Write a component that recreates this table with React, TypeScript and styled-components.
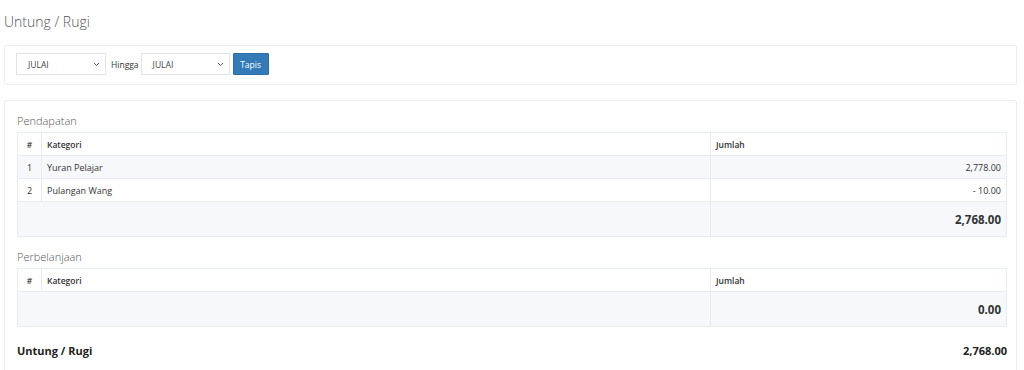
import React from "react";
import styled, { createGlobalStyle } from "styled-components";

const Global = createGlobalStyle`
  html, body { margin: 0; padding: 0; background: #fff; }
  body { font-family: "Open Sans", "Noto Sans", sans-serif; color: #333; }
  * { box-sizing: border-box; }
`;

const Page = styled.div`
  padding: 0 4px 0 4px;
  width: 1021px;
`;

const Title = styled.h1`
  margin: 0;
  padding: 12px 0 0 0;
  height: 45px;
  font-size: 14px;
  font-weight: 300;
  color: #555;
`;

const Box = styled.div<{ $pad: string }>`
  border: 1px solid #eceef2;
  border-radius: 2px;
  padding: ${(p) => p.$pad};
  background: #fff;
`;

const FilterRow = styled.div`
  display: flex;
  align-items: center;
`;

const SelectBox = styled.div<{ $w: number }>`
  width: ${(p) => p.$w}px;
  height: 22px;
  border: 1px solid #dfe2e8;
  display: flex;
  align-items: center;
  justify-content: space-between;
  padding: 0 5px 0 11px;
  font-size: 8.5px;
  color: #444;
  background: #fff;
`;

const Label = styled.span`
  font-size: 8.5px;
  color: #333;
  margin: 0 2px 0 5px;
`;

const Button = styled.button`
  height: 22px;
  width: 36px;
  margin-left: 3px;
  border: 1px solid #2e6da4;
  background: #337ab7;
  color: #fff;
  font-family: inherit;
  font-size: 8.5px;
  padding: 0;
  border-radius: 1px;
`;

const Section = styled.h3`
  margin: 0;
  font-size: 11px;
  font-weight: 300;
  color: #555;
  height: 22px;
  padding-bottom: 2px;
  display: flex;
  align-items: center;
`;

const Table = styled.table`
  width: 990px;
  border-collapse: collapse;
  color: #333;
`;

const Th = styled.th<{ $w?: number }>`
  border: 1px solid #e8ebf0;
  text-align: ${(p) => (p.$w === 24 ? "center" : "left")};
  font-weight: 600;
  font-size: 8.5px;
  height: 23px;
  padding: 0 5px;
  width: ${(p) => (p.$w ? `${p.$w}px` : "auto")};
`;

const Tr = styled.tr<{ $alt?: boolean }>`
  background: ${(p) => (p.$alt ? "#f7f8fb" : "#fff")};
`;

const Td = styled.td<{ $align?: string; $big?: boolean }>`
  border: 1px solid #e8ebf0;
  height: ${(p) => (p.$big ? "35px" : "23px")};
  padding: 0 5px;
  text-align: ${(p) => p.$align || "left"};
  font-size: ${(p) => (p.$big ? "11.5px" : "9px")};
  font-weight: ${(p) => (p.$big ? 700 : 400)};
`;

const Gap = styled.div<{ $h: number }>`
  height: ${(p) => p.$h}px;
`;

const TotalRow = styled.div`
  display: flex;
  justify-content: space-between;
  align-items: center;
  width: 990px;
  height: 46px;
  font-size: 11px;
  font-weight: 700;
  color: #222;
`;

const Chevron = () => (
  <svg width="7" height="5" viewBox="0 0 7 5">
    <path d="M1 1l2.5 2.5L6 1" fill="none" stroke="#555" strokeWidth="1" />
  </svg>
);

export default function App() {
  return (
    <Page>
      <Global />
      <Title>Untung / Rugi</Title>
      <Box $pad="7px 11px 9px 11px">
        <FilterRow>
          <SelectBox $w={90}>
            JULAI <Chevron />
          </SelectBox>
          <Label>Hingga</Label>
          <SelectBox $w={89}>
            JULAI <Chevron />
          </SelectBox>
          <Button>Tapis</Button>
        </FilterRow>
      </Box>
      <Gap $h={15} />
      <Box $pad="9px 12px 0 12px">
        <Section>Pendapatan</Section>
        <Table>
          <thead>
            <Tr>
              <Th $w={24}>#</Th>
              <Th $w={669}>Kategori</Th>
              <Th>Jumlah</Th>
            </Tr>
          </thead>
          <tbody>
            <Tr $alt>
              <Td $align="center">1</Td>
              <Td>Yuran Pelajar</Td>
              <Td $align="right">2,778.00</Td>
            </Tr>
            <Tr>
              <Td $align="center">2</Td>
              <Td>Pulangan Wang</Td>
              <Td $align="right">- 10.00</Td>
            </Tr>
            <Tr $alt>
              <Td colSpan={2} $big></Td>
              <Td $align="right" $big>2,768.00</Td>
            </Tr>
          </tbody>
        </Table>
        <Gap $h={9} />
        <Section>Perbelanjaan</Section>
        <Table>
          <thead>
            <Tr>
              <Th $w={24}>#</Th>
              <Th $w={669}>Kategori</Th>
              <Th>Jumlah</Th>
            </Tr>
          </thead>
          <tbody>
            <Tr $alt>
              <Td colSpan={2} $big></Td>
              <Td $align="right" $big>0.00</Td>
            </Tr>
          </tbody>
        </Table>
        <TotalRow>
          <span>Untung / Rugi</span>
          <span>2,768.00</span>
        </TotalRow>
      </Box>
    </Page>
  );
}
